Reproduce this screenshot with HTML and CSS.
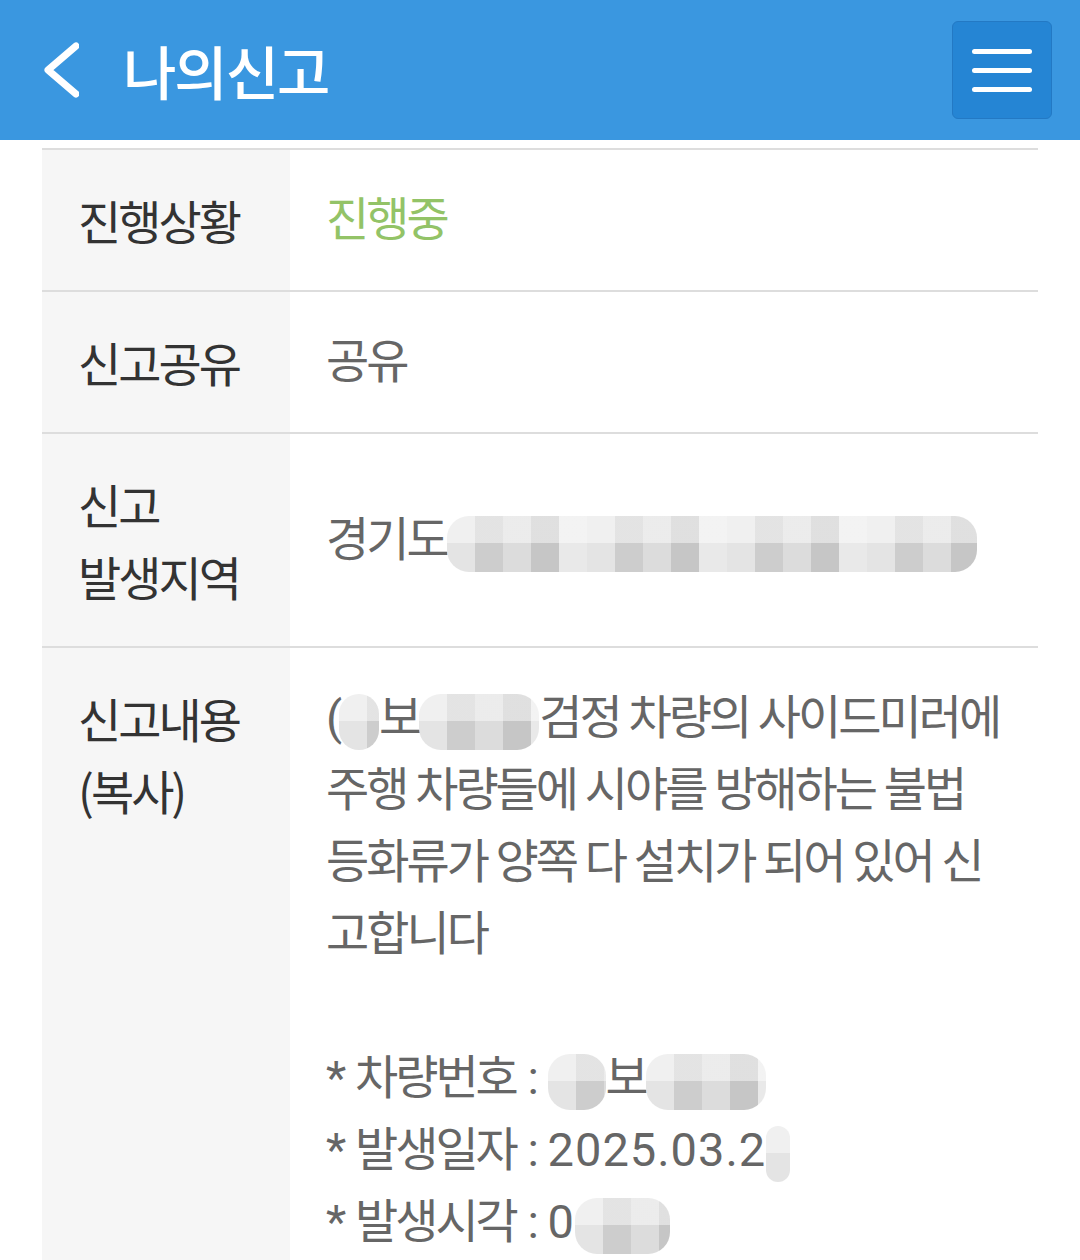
FILE: index.html
```html
<!DOCTYPE HTML>
<html>
    <head>
        <meta charset="UTF-8">
        <title>나의신고</title>
        <link rel="stylesheet" href="styles.css">
    </head>
    <body>
        <div class="header">
            <a class="back" href="#">
                <svg width="40" height="60" viewBox="0 0 40 60">
                    <path d="M37 6 L9 30 L37 54" fill="none" stroke="#fff" stroke-width="7" stroke-linecap="round" stroke-linejoin="round"/>
                </svg>
            </a>
            <h1 class="title">나의신고</h1>
            <a class="menu" href="#">
                <span></span>
                <span></span>
                <span></span>
            </a>
        </div>

        <div class="wrap">
            <table class="info">
                <tr>
                    <th>진행상황</th>
                    <td class="green">진행중</td>
                </tr>
                <tr>
                    <th>신고공유</th>
                    <td>공유</td>
                </tr>
                <tr>
                    <th>신고<br>발생지역</th>
                    <td>경기도<span class="blur b-addr"></span></td>
                </tr>
                <tr>
                    <th class="top">신고내용<br>(복사)</th>
                    <td class="top">(<span class="blur b-car1"></span>보<span class="blur b-car2"></span>검정 차량의 사이드미러에 주행 차량들에 시야를 방해하는 불법 등화류가 양쪽 다 설치가 되어 있어 신고합니다<br><br>
                        <span class="meta">* 차량번호 : </span><span class="blur b-num1"></span>보<span class="blur b-num2"></span><br>
                        <span class="meta">* 발생일자 : </span><span class="num">2025.03.2</span><span class="blur b-date"></span><br>
                        <span class="meta">* 발생시각 : </span><span class="num">0</span><span class="blur b-time"></span>
                    </td>
                </tr>
            </table>
        </div>
    </body>
</html>
```

FILE: styles.css
```css
body,h1{margin:0;}
body{
    background-color:#fff;
    font-family:"Roboto","Noto Sans CJK KR",sans-serif;
}
.header{
    display:flex;
    align-items:center;
    height:140px;
    padding:0 28px 0 39px;
    background-color:#3a97e0;
    box-sizing:border-box;
}
.header .back{
    display:block;
    width:40px;
    height:60px;
}
.header .back svg{
    display:block;
}
.header .title{
    flex:1;
    margin-left:44px;
    color:#fff;
    font-family:"Noto Sans CJK KR",sans-serif;
    font-size:58px;
    font-weight:500;
    letter-spacing:-2px;
}
.header .menu{
    display:flex;
    flex-direction:column;
    justify-content:center;
    gap:14px;
    width:100px;
    height:98px;
    padding:0 19px;
    box-sizing:border-box;
    background-color:#2585d4;
    border:1px solid #2379c4;
    border-radius:6px;
}
.header .menu span{
    display:block;
    height:5px;
    background-color:#fff;
    border-radius:3px;
}
.wrap{
    padding:8px 42px 0;
}
.info{
    width:100%;
    border-collapse:collapse;
    border-top:2px solid #ddd;
}
.info tr{
    border-bottom:2px solid #ddd;
}
.info th,
.info td{
    padding:34px 36px;
    line-height:72px;
    font-size:47px;
    letter-spacing:-3px;
    text-align:left;
    vertical-align:middle;
}
.info th{
    width:176px;
    background-color:#f6f6f6;
    color:#333;
    font-weight:400;
    font-family:"Noto Sans CJK KR",sans-serif;
}
.info td{
    color:#666;
}
.info td.green{
    color:#93c367;
}
.info .top{
    vertical-align:top;
}
.info .meta{
    word-spacing:3px;
}
.info .num{
    letter-spacing:1px;
}
.blur{
    display:inline-block;
    height:56px;
    vertical-align:middle;
    border-radius:22px;
    background-color:#d8d8d8;
    background-image:
        linear-gradient(to bottom,rgba(255,255,255,.45) 0,rgba(255,255,255,.45) 48%,rgba(255,255,255,0) 48%),
        repeating-linear-gradient(90deg,#e4e4e4 0,#e4e4e4 28px,#cdcdcd 28px,#cdcdcd 56px,#dcdcdc 56px,#dcdcdc 84px,#c6c6c6 84px,#c6c6c6 112px,#e9e9e9 112px,#e9e9e9 140px);
}
.b-addr{width:530px;}
.b-car1{width:40px;}
.b-car2{width:120px;}
.b-num1{width:58px;}
.b-num2{width:120px;}
.b-date{width:24px;}
.b-time{width:95px;}
```
